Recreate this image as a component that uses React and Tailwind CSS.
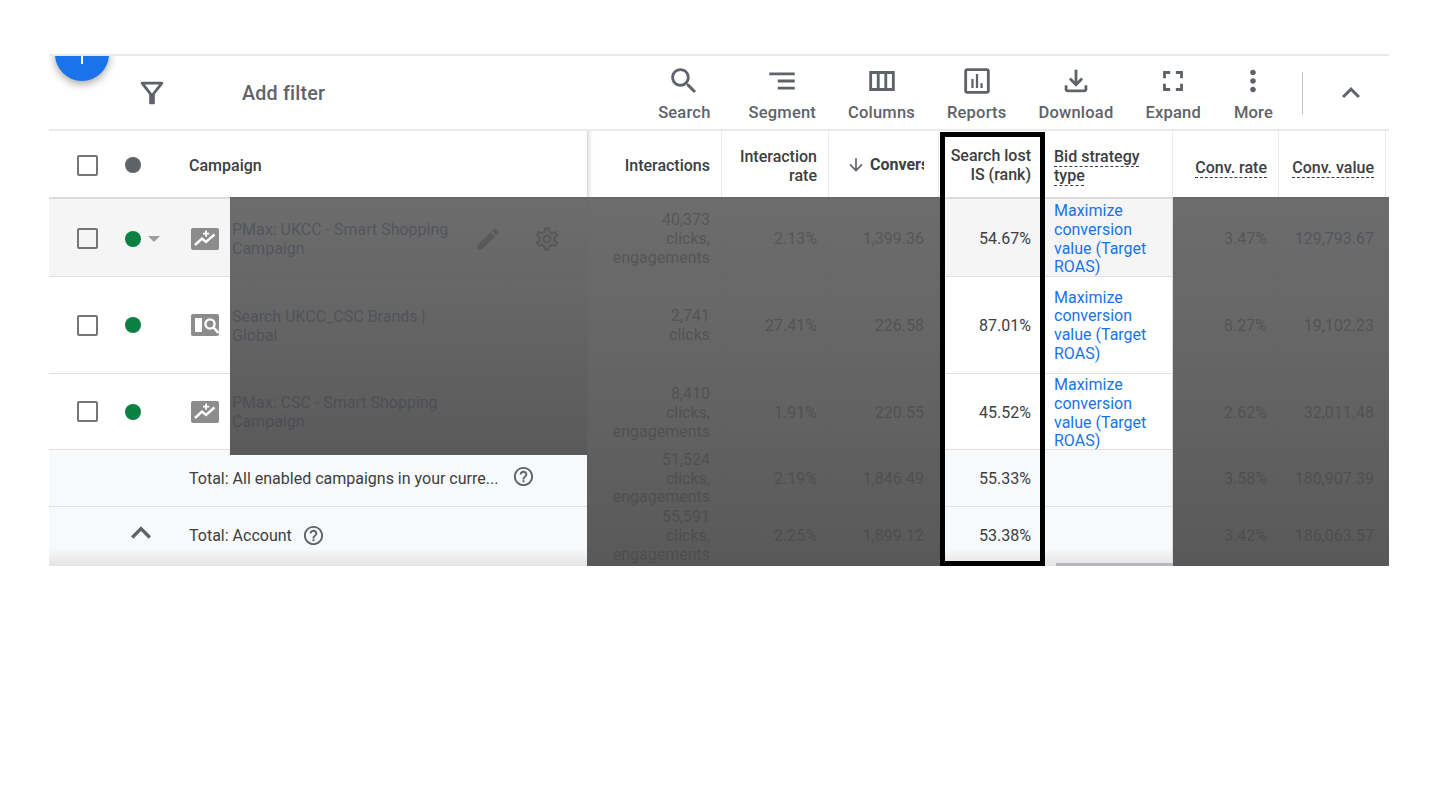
import React from 'react';

const Icon = ({ d, size = 34, className = 'text-[#5f6368]' }) => (
    <svg width={size} height={size} viewBox="0 0 24 24" fill="currentColor" className={`shrink-0 ${className}`}>
        <path d={d} />
    </svg>
);

const icons = {
    search: 'M15.5 14h-.79l-.28-.27C15.41 12.59 16 11.11 16 9.5 16 5.91 13.09 3 9.5 3S3 5.91 3 9.5 5.91 16 9.5 16c1.61 0 3.09-.59 4.23-1.57l.27.28v.79l5 4.99L20.49 19l-4.99-5zm-6 0C7.01 14 5 11.99 5 9.5S7.01 5 9.5 5 14 7.01 14 9.5 11.99 14 9.5 14z',
    filter: 'M7 6h10l-5.01 6.3L7 6zm-2.75-.39C6.27 8.2 10 13 10 13v6c0 .55.45 1 1 1h2c.55 0 1-.45 1-1v-6s3.72-4.8 5.74-7.39c.51-.66.04-1.61-.79-1.61H5.04c-.83 0-1.3.95-.79 1.61z',
    segment: 'M9 18h12v-2H9v2zM3 6v2h18V6H3zm6 7h12v-2H9v2z',
    columns: 'M3 5v14h18V5H3zm5.33 12H5V7h3.33v10zm5.34 0h-3.33V7h3.33v10zM19 17h-3.33V7H19v10z',
    reports: 'M19 3H5c-1.1 0-2 .9-2 2v14c0 1.1.9 2 2 2h14c1.1 0 2-.9 2-2V5c0-1.1-.9-2-2-2zm0 16H5V5h14v14zM8 10.5h1.6V17H8v-6.5zm3.2-3.5h1.6v10h-1.6V7zm3.2 6.5H16V17h-1.6v-3.5z',
    download: 'M18 15v3H6v-3H4v3c0 1.1.9 2 2 2h12c1.1 0 2-.9 2-2v-3h-2zm-1-4l-1.41-1.41L13 12.17V4h-2v8.17L8.41 9.59 7 11l5 5 5-5z',
    expand: 'M7 14H5v5h5v-2H7v-3zm-2-4h2V7h3V5H5v5zm12 7h-3v2h5v-5h-2v3zM14 5v2h3v3h2V5h-5z',
    more: 'M12 8c1.1 0 2-.9 2-2s-.9-2-2-2-2 .9-2 2 .9 2 2 2zm0 2c-1.1 0-2 .9-2 2s.9 2 2 2 2-.9 2-2-.9-2-2-2zm0 6c-1.1 0-2 .9-2 2s.9 2 2 2 2-.9 2-2-.9-2-2-2z',
    chevron: 'M12 8l-6 6 1.41 1.41L12 10.83l4.59 4.58L18 14z',
    help: 'M11 18h2v-2h-2v2zm1-16C6.48 2 2 6.48 2 12s4.48 10 10 10 10-4.48 10-10S17.52 2 12 2zm0 18c-4.41 0-8-3.59-8-8s3.59-8 8-8 8 3.59 8 8-3.59 8-8 8zm0-14c-2.21 0-4 1.79-4 4h2c0-1.1.9-2 2-2s2 .9 2 2c0 2-3 1.75-3 5h2c0-2.25 3-2.5 3-5 0-2.21-1.79-4-4-4z',
    edit: 'M3 17.25V21h3.75L17.81 9.94l-3.75-3.75L3 17.25zM20.71 7.04c.39-.39.39-1.02 0-1.41l-2.34-2.34c-.39-.39-1.02-.39-1.41 0l-1.83 1.83 3.75 3.75 1.83-1.83z',
    gear: 'M19.43 12.98c.04-.32.07-.64.07-.98 0-.34-.03-.66-.07-.98l2.11-1.65c.19-.15.24-.42.12-.64l-2-3.46c-.09-.16-.26-.25-.44-.25-.06 0-.12.01-.17.03l-2.49 1c-.52-.4-1.08-.73-1.69-.98l-.38-2.65C14.46 2.18 14.25 2 14 2h-4c-.25 0-.46.18-.49.42l-.38 2.65c-.61.25-1.17.59-1.69.98l-2.49-1c-.06-.02-.12-.03-.18-.03-.17 0-.34.09-.43.25l-2 3.46c-.13.22-.07.49.12.64l2.11 1.65c-.04.32-.07.65-.07.98 0 .33.03.66.07.98l-2.11 1.65c-.19.15-.24.42-.12.64l2 3.46c.09.16.26.25.44.25.06 0 .12-.01.17-.03l2.49-1c.52.4 1.08.73 1.69.98l.38 2.65c.03.24.24.42.49.42h4c.25 0 .46-.18.49-.42l.38-2.65c.61-.25 1.17-.59 1.69-.98l2.49 1c.06.02.12.03.18.03.17 0 .34-.09.43-.25l2-3.46c.12-.22.07-.49-.12-.64l-2.11-1.65zm-1.98-1.71c.04.31.05.52.05.73 0 .21-.02.43-.05.73l-.14 1.13.89.7 1.08.84-.7 1.21-1.27-.51-1.04-.42-.9.68c-.43.32-.84.56-1.25.73l-1.06.43-.16 1.13-.2 1.35h-1.4l-.19-1.35-.16-1.13-1.06-.43c-.43-.18-.83-.41-1.23-.71l-.91-.7-1.06.43-1.27.51-.7-1.21 1.08-.84.89-.7-.14-1.13c-.03-.31-.05-.54-.05-.74s.02-.43.05-.73l.14-1.13-.89-.7-1.08-.84.7-1.21 1.27.51 1.04.42.9-.68c.43-.32.84-.56 1.25-.73l1.06-.43.16-1.13.2-1.35h1.39l.19 1.35.16 1.13 1.06.43c.43.18.83.41 1.23.71l.91.7 1.06-.43 1.27-.51.7 1.21-1.07.85-.89.7.14 1.13zM12 8c-2.21 0-4 1.79-4 4s1.79 4 4 4 4-1.79 4-4-1.79-4-4-4zm0 6c-1.1 0-2-.9-2-2s.9-2 2-2 2 .9 2 2-.9 2-2 2z',
    arrowDown: 'M20 12l-1.41-1.41L13 16.17V4h-2v12.17l-5.58-5.59L4 12l8 8 8-8z',
};

const tools = [
    { label: 'Search', icon: 'search' },
    { label: 'Segment', icon: 'segment', extra: 'ml-[6px]' },
    { label: 'Columns', icon: 'columns' },
    { label: 'Reports', icon: 'reports' },
    { label: 'Download', icon: 'download' },
    { label: 'Expand', icon: 'expand' },
    { label: 'More', icon: 'more', extra: 'ml-[1px]' },
];

const campaigns = [
    { name: 'PMax: UKCC - Smart Shopping Campaign', type: 'pmax', h: 'h-[78px] bg-[#f5f5f5]', left: 'pt-[2px]', shift: 'pt-[4px]', actions: true, link: true, interactions: ['40,373', 'clicks,', 'engagements'], rate: '2.13%', conv: '1,399.36', lost: '54.67%', convRate: '3.47%', value: '129,793.67' },
    { name: 'Search UKCC_CSC Brands | Global', type: 'search', h: 'h-[97px] bg-white', left: '', shift: 'pt-[2px]', interactions: ['2,741', 'clicks'], rate: '27.41%', conv: '226.58', lost: '87.01%', convRate: '8.27%', value: '19,102.23' },
    { name: 'PMax: CSC - Smart Shopping Campaign', type: 'pmax', h: 'h-[76px] bg-white', left: '', shift: 'pt-[4px]', interactions: ['8,410', 'clicks,', 'engagements'], rate: '1.91%', conv: '220.55', lost: '45.52%', convRate: '2.62%', value: '32,011.48' },
];

const cellBase = 'flex items-center shrink-0 h-full border-r border-[#e8eaed] text-right justify-end';

const Metrics = ({ row, bid, shift = '' }) => (
    <>
        <div className={`${cellBase} w-[134px] pr-[11px] ${shift}`}>
            <div>{row.interactions.map(t => <div key={t}>{t}</div>)}</div>
        </div>
        <div className={`${cellBase} w-[107px] pr-[11px] ${shift}`}>{row.rate}</div>
        <div className={`${cellBase} w-[110px] pr-[14px] ${shift}`}>{row.conv}</div>
        <div className={`${cellBase} w-[106px] pr-[13px] ${shift}`}>{row.lost}</div>
        <div className={`flex items-center shrink-0 h-full w-[128px] pl-[9px] pr-[14px] border-r border-[#dadce0] text-[#1a73e8] ${shift}`}>
            {bid && 'Maximize conversion value (Target ROAS)'}
        </div>
        <div className={`${cellBase} w-[106px] pr-[11px] ${shift}`}>{row.convRate}</div>
        <div className={`${cellBase} w-[107px] pr-[11px] ${shift} ${row.link ? 'text-[#1f3f80]' : ''}`}>{row.value}</div>
    </>
);

const CampaignIcon = ({ type }) => (
    <svg width="28" height="22" viewBox="0 0 28 22" className="shrink-0">
        <rect width="28" height="22" rx="2" fill="#8c8c8c" />
        {type === 'pmax' ? (
            <>
                <path d="M4 17l7-6.5 4 3.5 8.5-7.5" fill="none" stroke="#fff" strokeWidth="2.4" />
                <path d="M14.2 2.5h1.8v2.2h2.2v1.8H16v2.2h-1.8V6.5h-2.2V4.7h2.2z" fill="#fff" />
            </>
        ) : (
            <>
                <rect x="4" y="4" width="7" height="14" fill="#fff" />
                <circle cx="19" cy="10" r="4.6" fill="none" stroke="#fff" strokeWidth="2.4" />
                <path d="M22.5 13.5l5 5.5" stroke="#fff" strokeWidth="2.6" />
            </>
        )}
    </svg>
);

const Checkbox = () => <div className="w-[21px] h-[21px] shrink-0 border-[2.5px] border-[#757575] rounded-[2px]" />;

const Overlay = ({ className }) => (
    <div className={`absolute top-[143px] bg-gradient-to-b from-[#5a5a5ae0] to-[#4e4e4eee] ${className}`} />
);

const App = () => {
    return (
        <div className="w-[1430px] h-[804px] bg-white pl-[49px] pt-[54px] font-['Roboto',sans-serif] text-[16px] leading-[18.7px] text-[#3c4043] overflow-hidden">
            <div className="relative w-[1340px] h-[512px]">
                {/* Toolbar */}
                <div className="relative h-[77px] flex items-center border-y-2 border-[#e8eaed] overflow-hidden">
                    <div className="absolute left-[6px] -top-[29px] w-[54px] h-[54px] rounded-full bg-[#1a73e8] shadow-[0_3px_8px_rgba(0,0,0,0.35)] flex items-center justify-center">
                        <div className="w-[2px] h-[20px] bg-white" />
                    </div>
                    <div className="ml-[86px] w-[34px]">
                        <Icon d={icons.filter} />
                    </div>
                    <div className="ml-[73px] mt-[4px] text-[19.7px] font-medium tracking-[0.2px] text-[#5f6368]">Add filter</div>
                    <div className="ml-auto flex items-start gap-[32px] mt-[2px]">
                        {tools.map(t => (
                            <div key={t.label} className={`flex flex-col items-center text-[16.5px] font-medium tracking-[0.2px] text-[#5f6368] ${t.extra || ''}`}>
                                <Icon d={icons[t.icon]} />
                                <span className="mt-[6px]">{t.label}</span>
                            </div>
                        ))}
                    </div>
                    <div className="ml-[29px] w-[1px] h-[42px] bg-[#bdc1c6]" />
                    <div className="ml-[30px] mr-[20px]">
                        <Icon d={icons.chevron} size={36} />
                    </div>
                </div>

                {/* Header */}
                <div className="flex h-[68px] border-b-2 border-[#dadce0] font-medium">
                    <div className="flex items-center w-[539px] shrink-0 h-full pl-[28px] pt-[2px] border-r border-[#dadce0]">
                        <Checkbox />
                        <div className="ml-[27px] w-[16px] h-[16px] rounded-full bg-[#5f6368]" />
                        <span className="ml-[48px] pt-[2px]">Campaign</span>
                    </div>
                    <div className={`${cellBase} w-[134px] pr-[11px] pt-[4px] bg-[linear-gradient(to_right,#e8e8e8,#ffffff_5px)]`}>Interactions</div>
                    <div className={`${cellBase} w-[107px] pr-[11px] pt-[6px]`}>Interaction<br />rate</div>
                    <div className={`${cellBase} w-[110px] pr-[14px] pt-[2px]`}>
                        <Icon d={icons.arrowDown} size={20} />
                        <span className="ml-[4px] w-[54px] overflow-hidden whitespace-nowrap text-left font-bold">Conversions</span>
                    </div>
                    <div className={`${cellBase} w-[106px] pr-[13px] pt-[4px]`}>Search lost<br />IS (rank)</div>
                    <div className="flex items-center shrink-0 h-full w-[128px] pl-[9px] pr-[24px] pt-[6px] border-r border-[#e8eaed]">
                        <span className="underline decoration-dashed decoration-1 underline-offset-[4px]">Bid strategy type</span>
                    </div>
                    <div className={`${cellBase} w-[106px] pr-[11px]`}>
                        <span className="underline decoration-dashed decoration-1 underline-offset-[4px] mt-[8px]">Conv. rate</span>
                    </div>
                    <div className={`${cellBase} w-[107px] pr-[11px]`}>
                        <span className="underline decoration-dashed decoration-1 underline-offset-[4px] mt-[8px]">Conv. value</span>
                    </div>
                </div>

                {/* Campaign rows */}
                {campaigns.map(row => (
                    <div key={row.name} className={`flex border-b border-[#e0e0e0] ${row.h}`}>
                        <div className={`flex items-center w-[539px] shrink-0 h-full pl-[28px] border-r border-[#dadce0] ${row.left}`}>
                            <Checkbox />
                            <div className="ml-[27px] w-[16px] h-[16px] rounded-full bg-[#0b8043] shrink-0" />
                            <div className="w-[50px] shrink-0 pl-[7px]">
                                {row.actions && <div className="w-0 h-0 border-x-[6px] border-x-transparent border-t-[6px] border-t-[#9e9e9e]" />}
                            </div>
                            <CampaignIcon type={row.type} />
                            <div className="ml-[13px] w-[225px] shrink-0 pt-[3px] text-[#1f3f80]">{row.name}</div>
                            {row.actions && (
                                <>
                                    <div className="ml-[17px]"><Icon d={icons.edit} size={28} /></div>
                                    <div className="ml-[31px]"><Icon d={icons.gear} size={28} /></div>
                                </>
                            )}
                        </div>
                        <Metrics row={row} bid shift={row.shift} />
                    </div>
                ))}

                {/* Totals */}
                <div className="flex h-[57px] border-b border-[#e0e0e0] bg-[#f8f9fa]">
                    <div className="flex items-center w-[539px] shrink-0 h-full pl-[140px] border-r border-[#dadce0]">
                        <span className="whitespace-nowrap pt-[2px]">Total: All enabled campaigns in your curre...</span>
                        <div className="ml-[14px] -mt-[3px]"><Icon d={icons.help} size={23} /></div>
                    </div>
                    <Metrics shift="pt-[2px]" row={{ interactions: ['51,524', 'clicks,', 'engagements'], rate: '2.19%', conv: '1,846.49', lost: '55.33%', convRate: '3.58%', value: '180,907.39' }} />
                </div>
                <div className="flex h-[59px] bg-gradient-to-b from-[#f8f9fa] from-70% to-[#e4e4e4]">
                    <div className="flex items-center w-[539px] shrink-0 h-full pl-[72px] border-r border-[#dadce0]">
                        <div className="-mt-[8px]"><Icon d={icons.chevron} size={40} /></div>
                        <span className="ml-[28px]">Total: Account</span>
                        <div className="ml-[10px] -mt-[3px]"><Icon d={icons.help} size={23} /></div>
                    </div>
                    <Metrics row={{ interactions: ['55,591', 'clicks,', 'engagements'], rate: '2.25%', conv: '1,899.12', lost: '53.38%', convRate: '3.42%', value: '186,063.57' }} />
                </div>

                {/* Scrollbar thumb */}
                <div className="absolute left-[1007px] bottom-0 w-[117px] h-[3px] bg-[#b9b6c2]" />

                {/* Redaction overlays and highlight box drawn over the table */}
                <Overlay className="left-[181px] w-[357px] h-[258px]" />
                <Overlay className="left-[538px] w-[353px] h-[369px]" />
                <Overlay className="left-[1124px] w-[216px] h-[369px]" />
                <div className="absolute left-[891px] top-[78px] w-[105px] h-[434px] border-[5px] border-black" />
            </div>
        </div>
    );
};

export default App;
